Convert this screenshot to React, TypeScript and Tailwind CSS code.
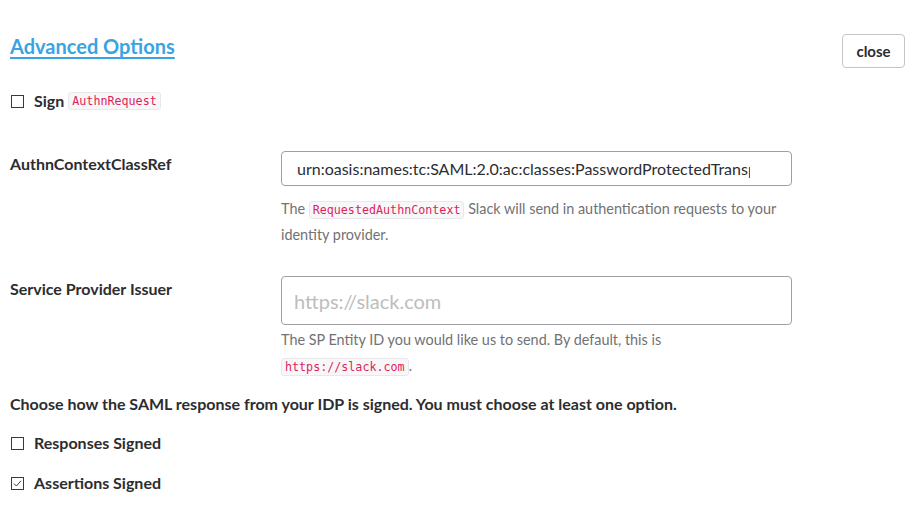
import React from "react";

const Code = ({ children }: { children: React.ReactNode }) => (
  <code className="inline-block rounded-[3px] border border-[#e8e8e8] bg-[#f7f7f9] px-[3px] align-middle text-[11.7px] leading-[16px] text-[#e01e5a] [font-family:'DejaVu_Sans_Mono',monospace]">
    {children}
  </code>
);

const Box = ({ checked = false }: { checked?: boolean }) => (
  <span className="flex h-[13px] w-[13px] shrink-0 items-center justify-center border border-[#3a3a3a] bg-white">
    {checked && (
      <svg width="11" height="11" viewBox="0 0 11 11" fill="none">
        <path d="M2 5.6 L4.4 8 L9 2.8" stroke="#3a3a3a" strokeWidth="1" />
      </svg>
    )}
  </span>
);

const CheckRow = ({ label, checked, extra }: { label: string; checked?: boolean; extra?: React.ReactNode }) => (
  <label className="flex h-[22px] items-center pl-[11px]">
    <Box checked={checked} />
    <span className="ml-[10px] text-[16px] font-bold text-[#2c2d30]">{label}</span>
    {extra && <span className="ml-[4px] flex items-center">{extra}</span>}
  </label>
);

export default function App() {
  return (
    <div className="min-h-[520px] bg-white text-[#2c2d30] [font-family:Lato,'Liberation_Sans',sans-serif]">
      {/* Header */}
      <div className="flex items-start justify-between pl-[10px] pr-[8px] pt-[33px]">
        <a href="#" className="text-[20px] font-bold leading-[26px] text-[#3aa3e3] underline decoration-[1.5px] underline-offset-[3px]">
          Advanced Options
        </a>
        <button className="mt-[1px] h-[34px] w-[63px] rounded-[4px] border border-[#c5c5c5] bg-white text-[15px] font-bold text-[#2c2d30]">
          close
        </button>
      </div>

      <div className="mt-[22px]">
        <CheckRow label="Sign" extra={<Code>AuthnRequest</Code>} />
      </div>

      {/* AuthnContextClassRef */}
      <div className="mt-[39px] flex">
        <div className="w-[281px] shrink-0 pl-[10px] text-[16px] font-bold leading-[26px]">AuthnContextClassRef</div>
        <div className="w-[511px]">
          <input
            readOnly
            value="urn:oasis:names:tc:SAML:2.0:ac:classes:PasswordProtectedTransport"
            className="h-[35px] w-full rounded-[4px] border border-[#a0a0a2] pl-[15px] pr-[41px] text-[16px] text-[#2c2d30] outline-none"
          />
          <p className="mt-[10px] text-[14.4px] leading-[26px] text-[#717274]">
            The <Code>RequestedAuthnContext</Code> Slack will send in authentication requests to your identity provider.
          </p>
        </div>
      </div>

      {/* Service Provider Issuer */}
      <div className="mt-[28px] flex">
        <div className="w-[281px] shrink-0 pl-[10px] text-[16px] font-bold leading-[26px]">Service Provider Issuer</div>
        <div className="w-[511px]">
          <input
            placeholder="https://slack.com"
            className="h-[49px] w-full rounded-[4px] border border-[#a0a0a2] px-[12px] text-[20px] text-[#2c2d30] outline-none placeholder:text-[#bdbdbd]"
          />
          <p className="mt-[2px] text-[14.4px] leading-[26px] text-[#717274]">
            The SP Entity ID you would like us to send. By default, this is <Code>https://slack.com</Code>.
          </p>
        </div>
      </div>

      <p className="mt-[13px] pl-[10px] text-[16px] font-bold leading-[24px]">
        Choose how the SAML response from your IDP is signed. You must choose at least one option.
      </p>

      <div className="mt-[16px]">
        <CheckRow label="Responses Signed" />
      </div>
      <div className="mt-[18px]">
        <CheckRow label="Assertions Signed" checked />
      </div>
    </div>
  );
}
